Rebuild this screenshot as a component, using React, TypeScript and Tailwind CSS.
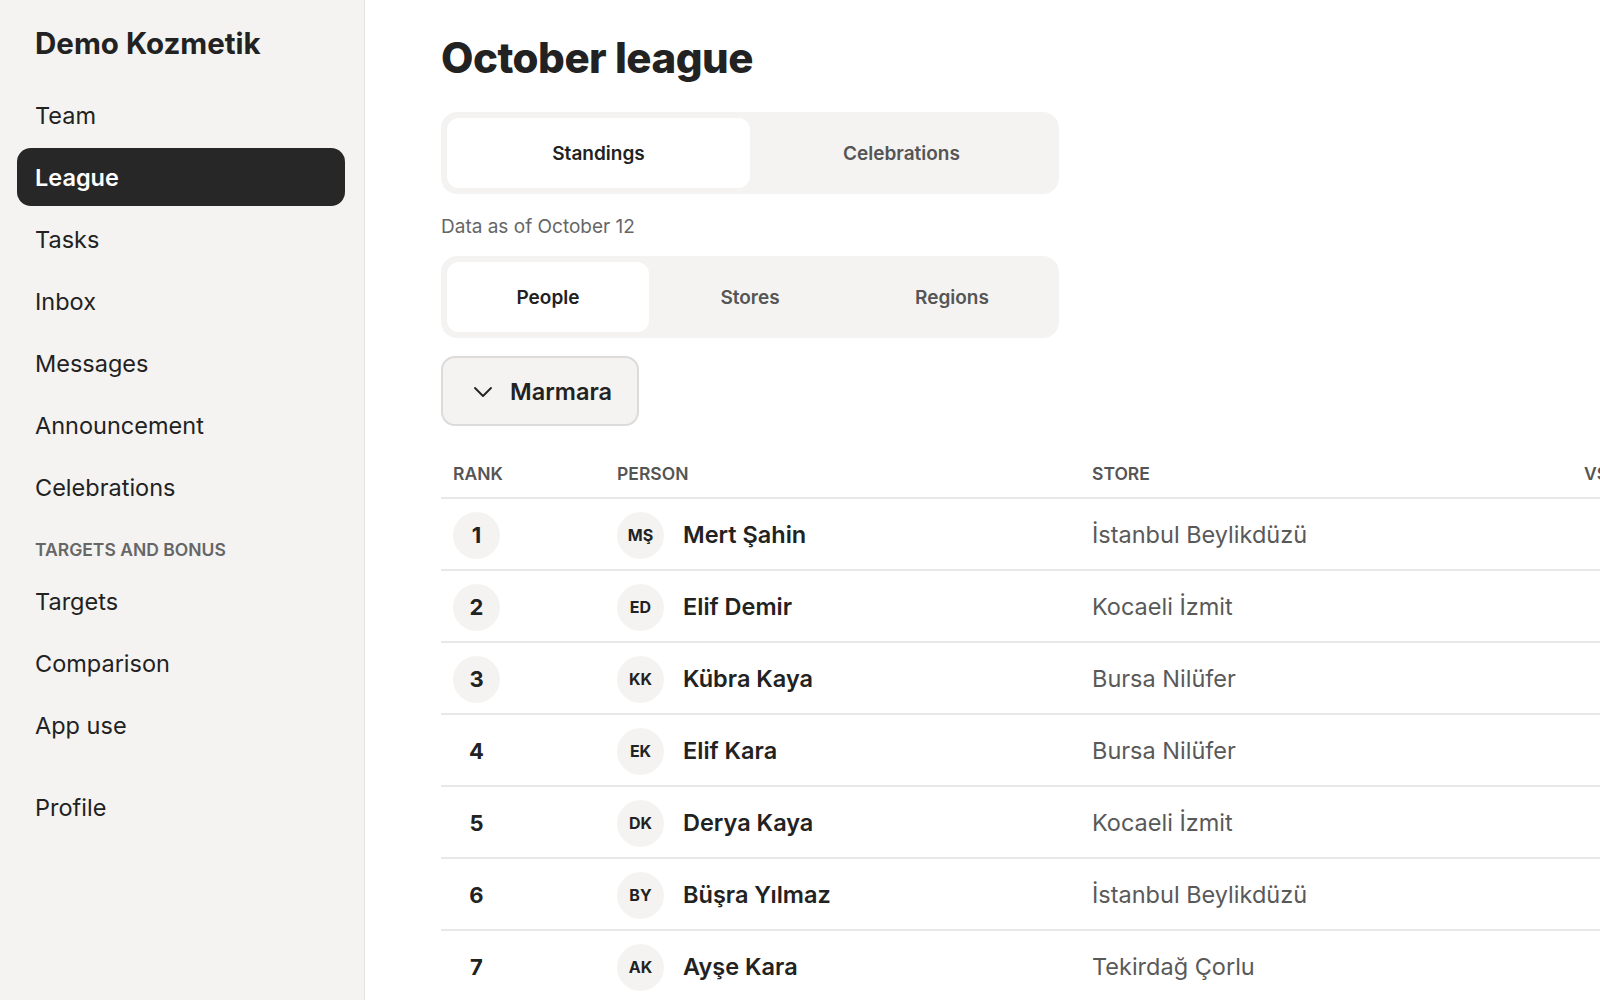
import { ChevronDown } from "lucide-react";

const navTop = ["Team", "League", "Tasks", "Inbox", "Messages", "Announcement", "Celebrations"];
const navTargets = ["Targets", "Comparison", "App use"];

const rows = [
  { rank: 1, initials: "MŞ", name: "Mert Şahin", store: "İstanbul Beylikdüzü" },
  { rank: 2, initials: "ED", name: "Elif Demir", store: "Kocaeli İzmit" },
  { rank: 3, initials: "KK", name: "Kübra Kaya", store: "Bursa Nilüfer" },
  { rank: 4, initials: "EK", name: "Elif Kara", store: "Bursa Nilüfer" },
  { rank: 5, initials: "DK", name: "Derya Kaya", store: "Kocaeli İzmit" },
  { rank: 6, initials: "BY", name: "Büşra Yılmaz", store: "İstanbul Beylikdüzü" },
  { rank: 7, initials: "AK", name: "Ayşe Kara", store: "Tekirdağ Çorlu" },
];

function NavItem({ label, active }: { label: string; active?: boolean }) {
  return (
    <div
      className={
        active
          ? "h-[58px] flex items-center pl-[18px] pt-[1px] rounded-[14px] bg-[#272727] text-white font-semibold text-[23.5px]"
          : "h-[58px] flex items-center pl-[18px] pt-[1px] text-[#222] text-[23.5px]"
      }
    >
      {label}
    </div>
  );
}

function App() {
  return (
    <div
      className="w-full h-screen flex overflow-hidden bg-white"
      style={{ fontFamily: "Inter, 'Noto Sans', sans-serif" }}
    >
      {/* sidebar */}
      <div className="w-[365px] shrink-0 h-full bg-[#f4f3f1] border-r-[1.5px] border-[#e4e3e1] pl-[17px] pr-[19px]">
        <div className="pt-[25px] pl-[18px] h-[61px] text-[29.5px] leading-[36px] font-bold text-[#222]">
          Demo Kozmetik
        </div>
        <div className="mt-[25px] flex flex-col gap-[4px]">
          {navTop.map((n) => (
            <NavItem key={n} label={n} active={n === "League"} />
          ))}
        </div>
        <div className="mt-[22px] pl-[18px] text-[17.5px] leading-[24px] font-semibold text-[#666]">
          TARGETS AND BONUS
        </div>
        <div className="mt-[10px] flex flex-col gap-[4px]">
          {navTargets.map((n) => (
            <NavItem key={n} label={n} />
          ))}
        </div>
        <div className="mt-[24px]">
          <NavItem label="Profile" />
        </div>
      </div>

      {/* main */}
      <div className="flex-1 min-w-0 pl-[76px] pt-[33px] overflow-hidden">
        <h1 className="text-[42px] leading-[50px] font-extrabold text-[#222] tracking-[-0.5px]">
          October league
        </h1>

        <div className="mt-[29px] w-[618px] h-[82px] bg-[#f4f3f1] rounded-[16px] p-[6px] grid grid-cols-2">
          <div className="bg-white rounded-[12px] flex items-center justify-center pt-[3px] text-[19px] font-semibold text-[#222]">
            Standings
          </div>
          <div className="flex items-center justify-center pt-[3px] text-[19px] font-semibold text-[#555]">
            Celebrations
          </div>
        </div>

        <div className="mt-[21px] text-[19px] leading-[24px] text-[#666]">Data as of October 12</div>

        <div className="mt-[17px] w-[618px] h-[82px] bg-[#f4f3f1] rounded-[16px] p-[6px] grid grid-cols-3">
          <div className="bg-white rounded-[12px] flex items-center justify-center pt-[3px] text-[19px] font-semibold text-[#222]">
            People
          </div>
          <div className="flex items-center justify-center pt-[3px] text-[19px] font-semibold text-[#555]">Stores</div>
          <div className="flex items-center justify-center pt-[3px] text-[19px] font-semibold text-[#555]">Regions</div>
        </div>

        <div className="mt-[18px] w-[198px] h-[70px] bg-[#f4f3f1] border-2 border-[#dcdbd9] rounded-[14px] flex items-center pl-[24px] pt-[2px] gap-[11px]">
          <ChevronDown size={32} strokeWidth={1.4} className="text-[#222]" />
          <span className="text-[23.5px] font-semibold text-[#222]">Marmara</span>
        </div>

        {/* table */}
        <div className="mt-[25px] w-[1400px]">
          <div className="h-[48px] flex items-center pt-[1px] border-b-2 border-[#e9e8e6] text-[17.5px] font-semibold text-[#555]">
            <div className="w-[164px] pl-[12px]">RANK</div>
            <div className="w-[475px] pl-[12px]">PERSON</div>
            <div className="w-[492px] pl-[12px]">STORE</div>
            <div className="pl-[12px]">VS</div>
          </div>
          {rows.map((r) => (
            <div key={r.rank} className="h-[72px] flex items-center pt-[2px] border-b-2 border-[#e9e8e6]">
              <div className="w-[164px] pl-[12px]">
                <div
                  className={
                    r.rank <= 3
                      ? "w-[47px] h-[47px] rounded-full bg-[#f4f3f1] flex items-center justify-center text-[22px] font-bold text-[#222]"
                      : "w-[47px] h-[47px] flex items-center justify-center text-[22px] font-bold text-[#222]"
                  }
                >
                  {r.rank}
                </div>
              </div>
              <div className="w-[475px] pl-[12px] flex items-center gap-[19px]">
                <div className="w-[47px] h-[47px] rounded-full bg-[#f4f3f1] flex items-center justify-center text-[16px] font-bold text-[#222]">
                  {r.initials}
                </div>
                <span className="text-[23.5px] font-semibold text-[#222]">{r.name}</span>
              </div>
              <div className="w-[492px] pl-[12px] text-[23.5px] text-[#595959]">{r.store}</div>
              <div className="pl-[12px]" />
            </div>
          ))}
        </div>
      </div>
    </div>
  );
}

export default App;
